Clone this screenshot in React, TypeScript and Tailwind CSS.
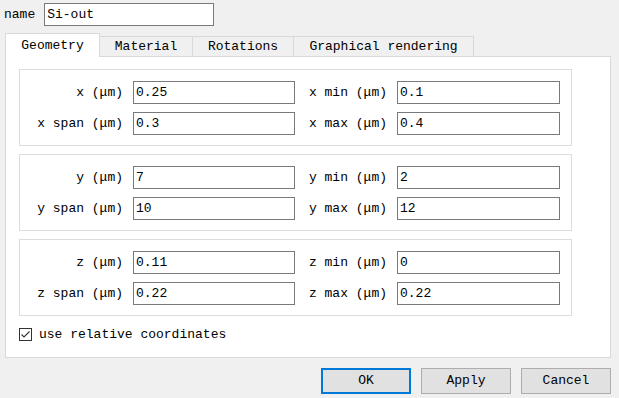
const font = { fontFamily: '"Liberation Mono", "Noto Sans CJK SC", monospace' };

const rows = [
  [
    ['x', '0.25', 'x min', '0.1'],
    ['x span', '0.3', 'x max', '0.4'],
  ],
  [
    ['y', '7', 'y min', '2'],
    ['y span', '10', 'y max', '12'],
  ],
  [
    ['z', '0.11', 'z min', '0'],
    ['z span', '0.22', 'z max', '0.22'],
  ],
];

const Field = ({ value, width }: { value: string; width: string }) => (
  <div className={`${width} h-[23px] border border-[#7a7a7a] bg-white flex items-center pl-[2px] text-[13px] text-black`}>
    {value}
  </div>
);

const Group = ({ lines }: { lines: string[][] }) => (
  <div className="w-[553px] border border-[#dcdcdc] pt-[11px] pb-[10px] flex flex-col gap-[8px]">
    {lines.map(([l1, v1, l2, v2]) => (
      <div key={l1} className="flex items-center">
        <div className="w-[105px] text-right pr-[2px] text-[13px]">{l1} (μm)</div>
        <div className="w-[8px]" />
        <Field value={v1} width="w-[162px]" />
        <div className="w-[94px] text-right pr-[2px] text-[13px]">{l2} (μm)</div>
        <div className="w-[8px]" />
        <Field value={v2} width="w-[163px]" />
      </div>
    ))}
  </div>
);

export default function App() {
  const tabs = [
    { label: 'Material', w: 'w-[93px]' },
    { label: 'Rotations', w: 'w-[101px]' },
    { label: 'Graphical rendering', w: 'w-[180px]' },
  ];
  return (
    <div className="w-[619px] h-[398px] bg-[#f0f0f0] text-black overflow-hidden" style={font}>
      {/* name row */}
      <div className="flex items-center pt-[3px] pl-[4px] gap-[9px]">
        <span className="text-[13px]">name</span>
        <div className="w-[170px] h-[23px] border border-[#7a7a7a] bg-white flex items-center pl-[2px] text-[13px]">
          Si-out
        </div>
      </div>

      {/* tabs */}
      <div className="flex items-end ml-[5px] mt-[7px] h-[24px] relative z-10 -mb-[1px]">
        <div className="w-[95px] h-[24px] bg-white border border-b-0 border-[#d9d9d9] flex items-center justify-center text-[13px]">
          Geometry
        </div>
        {tabs.map((t) => (
          <div
            key={t.label}
            className={`${t.w} h-[20px] mb-[1px] bg-[#f0f0f0] border-t border-r border-[#d9d9d9] flex items-center justify-center text-[13px]`}
          >
            {t.label}
          </div>
        ))}
      </div>

      {/* pane */}
      <div className="ml-[5px] w-[606px] h-[302px] bg-white border border-[#d9d9d9] pl-[13px] pt-[12px] flex flex-col">
        <div className="flex flex-col gap-[8px]">
          {rows.map((g, i) => (
            <Group key={i} lines={g} />
          ))}
        </div>
        <div className="flex items-center mt-[9px] gap-[7px]">
          <div className="w-[13px] h-[13px] border border-[#333333] bg-white flex items-center justify-center">
            <svg width="11" height="11" viewBox="0 0 11 11">
              <path d="M1.5 5.5 L4 8 L9.5 2.5" fill="none" stroke="#333333" strokeWidth="1.1" />
            </svg>
          </div>
          <span className="text-[13px]">use relative coordinates</span>
        </div>
      </div>

      {/* buttons */}
      <div className="flex justify-end gap-[10px] mt-[10px] w-[611px]">
        <button className="w-[90px] h-[26px] bg-[#e1e1e1] border-2 border-[#0078d7] text-[13px]" style={font}>
          OK
        </button>
        <button className="w-[90px] h-[26px] bg-[#e1e1e1] border border-[#adadad] text-[13px]" style={font}>
          Apply
        </button>
        <button className="w-[90px] h-[26px] bg-[#e1e1e1] border border-[#adadad] text-[13px]" style={font}>
          Cancel
        </button>
      </div>
    </div>
  );
}
